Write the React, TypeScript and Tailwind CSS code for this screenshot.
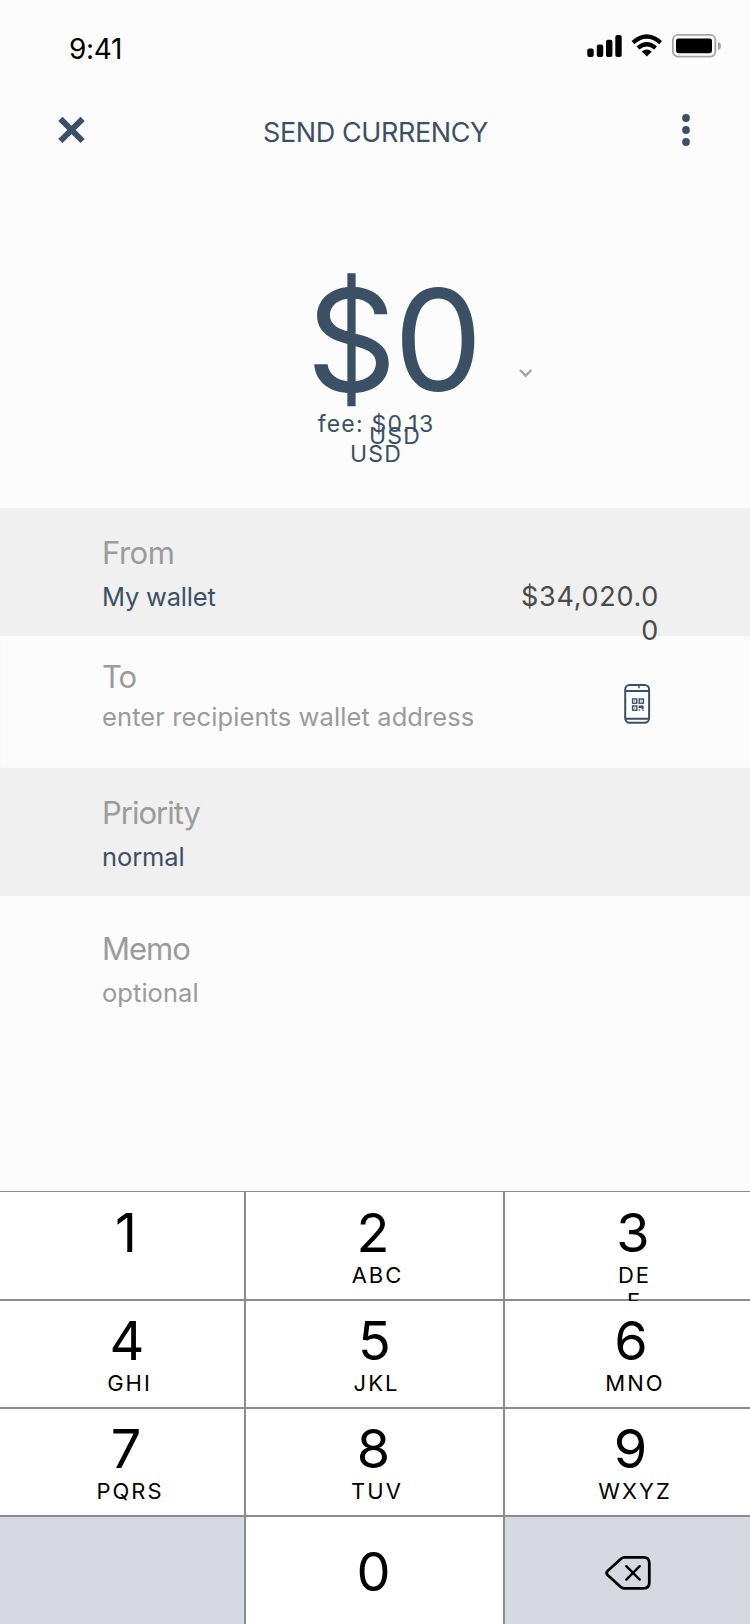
import type { ReactNode } from "react";

function StatusIcons() {
  return (
    <svg width="138" height="28" viewBox="586 32 138 28" className="block">
      <g fill="#000">
        <rect x="587.3" y="48.4" width="6.4" height="8.6" rx="2" />
        <rect x="596.8" y="44.4" width="6.4" height="12.6" rx="2" />
        <rect x="606" y="39.8" width="6.4" height="17.2" rx="2" />
        <rect x="615.3" y="35" width="6.4" height="22" rx="2" />
        <path d="M646.8 56.4 l-5 -4.9 q5 -4 10 0 z" />
      </g>
      <g fill="none" stroke="#000" strokeWidth="4.2">
        <path d="M633 42.6 Q646.8 30.4 660.6 42.6" />
        <path d="M638 48 Q646.8 40.6 655.6 48" />
      </g>
      <rect x="672.9" y="34.8" width="42.4" height="21.8" rx="5" fill="none" stroke="#a5a5a5" strokeWidth="1.8" />
      <rect x="676" y="38.4" width="36" height="14.8" rx="2.4" fill="#000" />
      <path d="M718 41.8 q3 1 3 4.1 q0 3.1 -3 4.1 z" fill="#a5a5a5" />
    </svg>
  );
}

function PhoneQr() {
  return (
    <svg width="28" height="42" viewBox="623 683 28 42" className="block">
      <g fill="none" stroke="#3c5065" strokeWidth="2">
        <rect x="625.2" y="685" width="23.9" height="37.8" rx="4.5" />
        <path d="M625.2 691.1H649.2M625.2 718.8H649.2" />
        <path d="M639 685v3.2" strokeWidth="1.5" />
        <g strokeWidth="1.4">
          <rect x="632.6" y="699" width="4.2" height="4.2" />
          <rect x="639.2" y="699" width="4.2" height="4.2" />
          <rect x="632.6" y="706" width="4.2" height="4.2" />
        </g>
      </g>
      <path
        fill="#3c5065"
        d="M634.2 700.6h1v1h-1zM640.8 700.6h1v1h-1zM634.2 707.6h1v1h-1zM638.6 705.4h5v4h-2v-1.5h-3zM638.6 709.4h1.4v1.4h-1.4zM642.6 710h1.2v1h-1.2z"
      />
    </svg>
  );
}

function Backspace() {
  return (
    <svg width="48" height="36" viewBox="604 1555 48 36" fill="none" stroke="#000" strokeLinecap="round" strokeLinejoin="round" className="block">
      <path strokeWidth="2.8" d="M624.5 1557.4H643.5Q649.3 1557.4 649.3 1563.2V1582.6Q649.3 1588.4 643.5 1588.4H624.5Q622.5 1588.4 621 1587.2L607.6 1575Q605.6 1573 607.6 1571L621 1558.7Q622.5 1557.4 624.5 1557.4Z" />
      <path strokeWidth="2.4" d="M626.3 1566.2l13.4 13.4M639.7 1566.2l-13.4 13.4" />
    </svg>
  );
}

interface FieldProps {
  label: string;
  value: string;
  className: string;
  labelClass?: string;
  valueClass: string;
  gap: string;
  children?: ReactNode;
}

function Field({ label, value, className, labelClass = "tracking-[-1px]", valueClass, gap, children }: FieldProps) {
  return (
    <section className={`flex justify-between pl-[102px] ${className}`}>
      <div className={`flex flex-col whitespace-nowrap ${gap}`}>
        <span className={`text-[31px] leading-[36px] text-[#9b9b9b] ${labelClass}`}>{label}</span>
        <span className={`text-[25.5px] leading-[32px] ${valueClass}`}>{value}</span>
      </div>
      {children}
    </section>
  );
}

function Key({ digit, letters, className, lettersClass = "pl-[9px]" }: { digit?: string; letters?: ReactNode; className: string; lettersClass?: string }) {
  return (
    <button className={`flex flex-col items-center overflow-hidden ${className}`}>
      <span className="h-[59px] text-[54px] leading-[60px]">{digit}</span>
      <span className={`text-[22px] leading-[26px] tracking-[2px] ${lettersClass}`}>{letters}</span>
    </button>
  );
}

const line = "shadow-[inset_-2px_-2px_0_#8c8c8c]";
const lineRight = "shadow-[inset_0_-2px_0_#8c8c8c]";

export default function App() {
  return (
    <main className="flex h-[1624px] w-[750px] flex-col overflow-hidden bg-[#fcfcfc] font-['Inter',sans-serif] text-black">
      <header className="flex h-[94px] items-start justify-between pl-[69px] pr-[26px] pt-8">
        <span className="text-[28px] leading-[34px] tracking-[-0.3px]">9:41</span>
        <StatusIcons />
      </header>

      <nav className="flex h-[86px] items-start justify-between pl-[57px] pr-[60px] text-[#3c5065]">
        <svg width="29" height="29" viewBox="0 0 29 29" className="mt-[21px]" stroke="currentColor" strokeWidth="6">
          <path d="M3.4 3.8L25.6 26M25.6 3.8L3.4 26" />
        </svg>
        <h1 className="mt-[22px] pr-[17px] text-[27px] leading-[34px] tracking-[-0.4px]">SEND CURRENCY</h1>
        <svg width="8" height="34" viewBox="0 0 8 34" className="mt-[19px]" fill="currentColor">
          <circle cx="4" cy="5" r="3.9" />
          <circle cx="4" cy="17" r="3.9" />
          <circle cx="4" cy="29" r="3.9" />
        </svg>
      </nav>

      <section className="relative flex h-[328px] flex-col items-center pt-[75px] text-[#3c5065]">
        <div className="pl-[36px] text-[141px] leading-[170px] tracking-[-3px]">$0</div>
        <p className="-mt-[16px] w-[130px] translate-x-px text-center text-[23px] leading-[30px] tracking-[1.2px]">fee: $0.13 USD</p>
        <span className="absolute left-[369px] top-[241px] text-[23px] leading-[30px] tracking-[1.2px]">USD</span>
        <svg width="14" height="9" viewBox="0 0 14 9" className="absolute left-[519px] top-[189px]" fill="none" stroke="#9ca6b3" strokeWidth="2.4">
          <path d="M1 1L6.7 6.7L12.4 1" />
        </svg>
      </section>

      <Field
        label="From"
        value="My wallet"
        className="h-32 bg-[#f0f0f0] pr-[91px] pt-[27px]"
        gap="gap-[10px]"
        labelClass="tracking-[-0.5px]"
        valueClass="tracking-[-0.2px] text-[#3c5065]"
      >
        <span className="relative z-10 mt-[45px] w-[140px] break-all text-right text-[27px] leading-[34px] tracking-[0.7px] text-[#4a4a4a]">$34,020.00</span>
      </Field>
      <Field
        label="To"
        value="enter recipients wallet address"
        className="h-[132px] pr-[99px] pt-[23px] shadow-[inset_0_0_0_2px_#fafafa]"
        gap="gap-[6px]"
        valueClass="tracking-[0.1px] text-[#9b9b9b]"
      >
        <div className="mt-[24px]">
          <PhoneQr />
        </div>
      </Field>
      <Field
        label="Priority"
        value="normal"
        className="h-32 bg-[#f0f0f0] pt-[27px]"
        gap="gap-[10px]"
        valueClass="tracking-[-0.1px] text-[#3c5065]"
      />
      <Field
        label="Memo"
        value="optional"
        className="h-[295px] pt-[35px]"
        gap="gap-[10px]"
        valueClass="tracking-[0.05px] text-[#9b9b9b]"
      />

      <div className="grid h-[433px] grid-cols-[246px_259px_245px] grid-rows-[109px_108px_108px_107px] border-t border-[#8c8c8c] bg-white">
        <Key digit="1" className={`${line} pt-[11px] pl-[6px]`} />
        <Key digit="2" letters="ABC" className={`${line} pt-[11px] pr-[5px]`} />
        <Key digit="3" letters={<>DE<br />F</>} className={`${lineRight} pt-[11px] pl-[11px]`} lettersClass="pl-[3px]" />
        <Key digit="4" letters="GHI" className={`${line} pt-[10px] pl-[8px]`} lettersClass="pl-[5px]" />
        <Key digit="5" letters="JKL" className={`${line} pt-[10px] pr-[2px]`} lettersClass="pl-[4px]" />
        <Key digit="6" letters="MNO" className={`${lineRight} pt-[10px] pl-[7px]`} lettersClass="pl-[8px]" />
        <Key digit="7" letters="PQRS" className={`${line} pt-[10px] pl-[6px]`} lettersClass="pl-[8px]" />
        <Key digit="8" letters="TUV" className={`${line} pt-[10px] pr-[4px]`} lettersClass="pl-[7px]" />
        <Key digit="9" letters="WXYZ" className={`${lineRight} pt-[10px] pl-[6px]`} />
        <div className="border-r-2 border-[#8c8c8c] bg-[#d6d9e1]" />
        <Key digit="0" className="border-r-2 border-[#8c8c8c] pt-[25px] pr-[2px]" />
        <button className="flex items-start justify-center bg-[#d6d9e1] pl-[1px] pt-[38px]">
          <Backspace />
        </button>
      </div>
    </main>
  );
}
